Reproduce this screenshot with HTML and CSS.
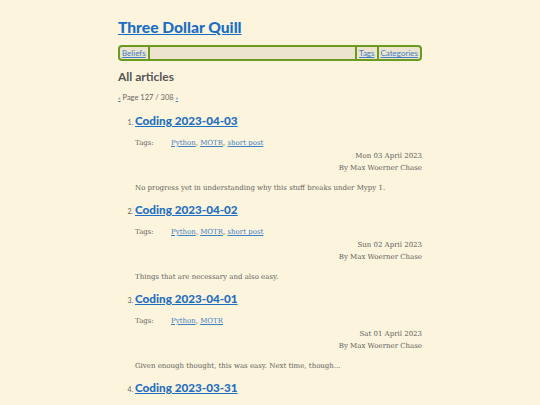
FILE: index.html
```html
<!DOCTYPE html>
<html>
<head>
<meta charset="utf-8">
<link rel="stylesheet" href="styles.css">
</head>
<body>
<div class="page">
  <header class="site-header">
    <h1 class="site-title"><a href="#">Three Dollar Quill</a></h1>
    <nav class="nav">
      <a class="nav-item" href="#">Beliefs</a>
      <span class="nav-spacer"></span>
      <a class="nav-item" href="#">Tags</a>
      <a class="nav-item nav-last" href="#">Categories</a>
    </nav>
  </header>
  <main>
    <h2 class="section-title">All articles</h2>
    <p class="pager"><a href="#">«</a> Page 127 / 308 <a href="#">»</a></p>
    <ol class="articles">
      <li class="article">
        <h3 class="article-title"><a href="#">Coding 2023-04-03</a></h3>
        <div class="tags"><span class="tags-label">Tags:</span><span><a href="#">Python</a>, <a href="#">MOTR</a>, <a href="#">short post</a></span></div>
        <div class="meta"><div>Mon 03 April 2023</div><div>By Max Woerner Chase</div></div>
        <p class="summary">No progress yet in understanding why this stuff breaks under Mypy 1.</p>
      </li>
      <li class="article">
        <h3 class="article-title"><a href="#">Coding 2023-04-02</a></h3>
        <div class="tags"><span class="tags-label">Tags:</span><span><a href="#">Python</a>, <a href="#">MOTR</a>, <a href="#">short post</a></span></div>
        <div class="meta"><div>Sun 02 April 2023</div><div>By Max Woerner Chase</div></div>
        <p class="summary">Things that are necessary and also easy.</p>
      </li>
      <li class="article">
        <h3 class="article-title"><a href="#">Coding 2023-04-01</a></h3>
        <div class="tags"><span class="tags-label">Tags:</span><span><a href="#">Python</a>, <a href="#">MOTR</a></span></div>
        <div class="meta"><div>Sat 01 April 2023</div><div>By Max Woerner Chase</div></div>
        <p class="summary">Given enough thought, this was easy. Next time, though...</p>
      </li>
      <li class="article">
        <h3 class="article-title"><a href="#">Coding 2023-03-31</a></h3>
      </li>
    </ol>
  </main>
</div>
</body>
</html>
```
FILE: styles.css
```css
html, body {
  margin: 0;
  padding: 0;
  background: #fcf4dc;
}
body {
  font-family: "DejaVu Serif", serif;
  color: #5a5a5a;
  font-size: 8px;
  overflow: hidden;
}
a {
  color: #1f6fc2;
}
.page {
  width: 304px;
  margin: 0 auto;
  padding-top: 16px;
}
.site-title {
  font-family: Lato, "Noto Sans", sans-serif;
  font-weight: 900;
  font-size: 15.6px;
  line-height: 22px;
  margin: 0 0 7px 0;
}
.site-title a {
  color: #1a6fc4;
}
.nav {
  display: flex;
  align-items: stretch;
  border: 2px solid #6a9a1e;
  border-radius: 4px;
  background: #ece4cf;
  height: 12px;
  font-family: Lato, "Noto Sans", sans-serif;
  font-size: 8px;
  line-height: 12px;
}
.nav-item {
  padding: 0 2px;
  color: #3f7fc4;
  border-right: 2px solid #6a9a1e;
}
.nav-last {
  border-right: none;
}
.nav-spacer {
  flex: 1;
  border-right: 2px solid #6a9a1e;
}
.section-title {
  font-family: Lato, "Noto Sans", sans-serif;
  font-weight: 700;
  font-size: 12px;
  color: #555;
  line-height: 16px;
  margin: 8px 0 0 0;
}
.pager {
  font-family: Lato, "Noto Sans", sans-serif;
  font-size: 7.5px;
  margin: 8px 0 0 0;
  line-height: 10px;
  color: #666;
}
.pager a {
  font-size: 6px;
  color: #3f7fc4;
}
.articles {
  margin: 9px 0 0 0;
  padding-left: 17px;
}
.article {
  font-family: Lato, "Noto Sans", sans-serif;
  font-size: 7px;
  color: #666;
  margin-bottom: 7px;
}
.article-title {
  font-family: Lato, "Noto Sans", sans-serif;
  font-weight: 900;
  font-size: 11.7px;
  line-height: 16px;
  margin: 0;
}
.tags {
  display: flex;
  font-family: "DejaVu Serif", serif;
  font-size: 7px;
  line-height: 12px;
  margin-top: 9px;
  color: #666;
}
.tags a {
  color: #3f7fc4;
}
.tags-label {
  width: 36px;
}
.meta {
  font-family: "DejaVu Serif", serif;
  font-size: 7px;
  line-height: 12px;
  margin-top: 1px;
  text-align: right;
  color: #5f5f5f;
}
.summary {
  font-family: "DejaVu Serif", serif;
  font-size: 7px;
  line-height: 12px;
  color: #5f5f5f;
  margin: 8px 0 0 0;
}
```
